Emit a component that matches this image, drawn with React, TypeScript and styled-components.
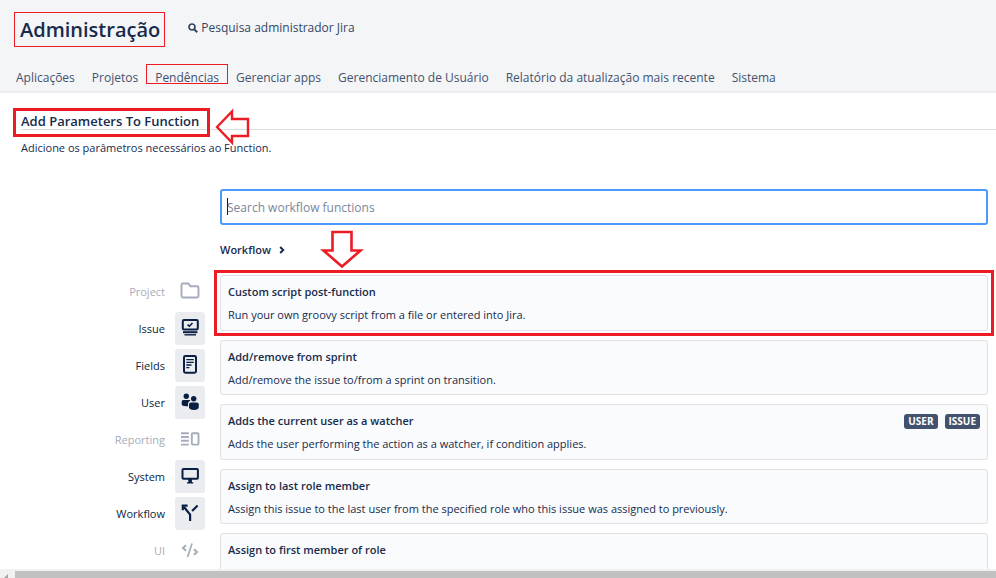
import React from "react";
import styled, { createGlobalStyle, css } from "styled-components";

const RED = "#ed1c24";
const NAVY = "#172b4d";

const GlobalStyle = createGlobalStyle`
  *, *::before, *::after { box-sizing: border-box; }
  body {
    margin: 0;
    background: #fff;
    color: ${NAVY};
    font: 11px/16px "Open Sans", "Noto Sans", sans-serif;
  }
  h1, h2, h3, p, ul { margin: 0; padding: 0; }
  button { font: inherit; color: inherit; background: none; border: 0; padding: 0; cursor: pointer; }
`;

const Page = styled.div`
  display: flex;
  flex-direction: column;
  height: 100vh;
  overflow: hidden;
`;

const Viewport = styled.div`
  flex: 1;
  min-height: 0;
  overflow: hidden;
`;

const Header = styled.header`
  background: #f4f5f7;
  border-bottom: 2px solid #ebecf0;
  padding-top: 12px;
`;

const TitleRow = styled.div`
  display: flex;
  align-items: flex-start;
  gap: 23px;
  padding: 0 14px;
`;

const PageTitle = styled.h1`
  border: 1px solid ${RED};
  padding: 0 4px 0 5px;
  font-size: 20px;
  font-weight: 600;
  line-height: 33px;
`;

const SearchTrigger = styled.button`
  display: flex;
  align-items: center;
  gap: 3px;
  height: 32px;
  color: #344563;
  font-size: 12px;
`;

const Nav = styled.nav`
  display: flex;
  gap: 17px;
  padding: 21px 16px 3px;
`;

const NavLink = styled.a<{ $marked?: boolean }>`
  position: relative;
  color: #42526e;
  font-size: 12px;
  line-height: 20px;
  text-decoration: none;
  white-space: nowrap;

  ${({ $marked }) =>
    $marked &&
    css`
      &::after {
        content: "";
        position: absolute;
        inset: -4px -9px 4px;
        border: 1px solid ${RED};
      }
    `}
`;

const Intro = styled.section`
  padding: 15px 0 0 13px;
`;

const HeadingRow = styled.div`
  position: relative;
  display: flex;
  align-items: center;

  &::before {
    content: "";
    position: absolute;
    top: 21px;
    left: 8px;
    right: 0;
    height: 1px;
    background: #dcdcdc;
  }
`;

const SectionTitle = styled.h2`
  position: relative;
  border: 3px solid ${RED};
  padding: 0 5px 2px;
  font-size: 13px;
  font-weight: 600;
  line-height: 21px;
  min-width: 197px;
`;

const LeftArrow = styled.svg`
  position: absolute;
  left: 202px;
  top: 0;
`;

const Hint = styled.p`
  padding: 2px 8px;
  line-height: 18px;
`;

const Workspace = styled.main`
  display: grid;
  grid-template-columns: 205px minmax(0, 1fr);
  column-gap: 15px;
  padding: 30px 8px 0 0;
`;

const SearchField = styled.label`
  grid-column: 2;
  position: relative;
  display: block;

  &::after {
    content: "";
    position: absolute;
    left: 7px;
    top: 9px;
    width: 1px;
    height: 17px;
    background: #091e42;
  }
`;

const SearchBox = styled.input`
  display: block;
  width: 100%;
  height: 36px;
  border: 2px solid #4c9aff;
  border-radius: 3px;
  padding: 0 5px;
  background: #fff;
  color: ${NAVY};
  font: 12px/20px "Open Sans", "Noto Sans", sans-serif;
  outline: 0;

  &::placeholder { color: #7a869a; opacity: 1; }
`;

const Crumbs = styled.div`
  grid-column: 2;
  position: relative;
  display: flex;
  align-items: center;
  height: 50px;
`;

const Crumb = styled.button`
  display: flex;
  align-items: center;
  gap: 8px;
  font-weight: 600;
`;

const DownArrow = styled.svg`
  position: absolute;
  left: 100px;
  top: 4px;
`;

const Categories = styled.ul`
  display: flex;
  flex-direction: column;
  gap: 4px;
  list-style: none;
`;

const Category = styled.button<{ $muted?: boolean }>`
  display: flex;
  justify-content: flex-end;
  align-items: center;
  gap: 10px;
  width: 100%;
  color: ${({ $muted }) => ($muted ? "#a5adba" : "#091e42")};
`;

const IconTile = styled.span<{ $muted?: boolean }>`
  width: 30px;
  height: 33px;
  border-radius: 3px;
  background: ${({ $muted }) => ($muted ? "transparent" : "#ebecf0")};
  svg { display: block; }
`;

const Functions = styled.ul`
  display: flex;
  flex-direction: column;
  gap: 9px;
  list-style: none;
`;

const Card = styled.li<{ $marked?: boolean }>`
  position: relative;
  border: 1px solid #dfe1e6;
  border-radius: 3px;
  background: #fafbfc;
  padding: 8px 7px 6px;

  &:nth-child(odd) { min-height: 56px; }

  ${({ $marked }) =>
    $marked &&
    css`
      &::after {
        content: "";
        position: absolute;
        inset: -6px -7px;
        border: 3px solid ${RED};
      }
    `}
`;

const CardHead = styled.div`
  display: flex;
  justify-content: space-between;
  align-items: center;
  height: 16px;
`;

const CardTitle = styled.h3`
  font-size: 11px;
  font-weight: 600;
`;

const CardText = styled.p`
  padding-top: 7px;
`;

const Tags = styled.div`
  display: flex;
  gap: 7px;
`;

const Tag = styled.span`
  border-radius: 3px;
  background: #42526e;
  color: #fff;
  padding: 0 4px;
  font-size: 10px;
  font-weight: 700;
  line-height: 15px;
`;

const ScrollTrack = styled.div`
  display: flex;
  flex: none;
  height: 9px;
  padding-top: 2px;
  background: #f1f1f1;
`;

const ScrollThumb = styled.div`
  flex: 1;
  background: #c1c1c1;
`;

const ScrollButton = styled.svg`
  width: 15px;
  height: 7px;
`;

type IconName = "project" | "issue" | "fields" | "user" | "reporting" | "system" | "workflow" | "ui";

const drawings: Record<IconName, React.ReactNode> = {
  project: (
    <path d="M6.5 10Q6.5 8.5 8 8.5H13.2L15.4 11.2H22Q23.5 11.2 23.5 12.7V21Q23.5 22.5 22 22.5H8Q6.5 22.5 6.5 21Z" />
  ),
  issue: (
    <>
      <rect x="7.8" y="8.1" width="15" height="9.4" rx="1.2" strokeWidth="2" />
      <path d="M12.5 12.6L14.4 14.2L17.5 11" strokeWidth="1.6" />
      <path d="M8 20.2H22.4" strokeWidth="2" />
      <path d="M9.5 22.8H21" strokeWidth="1.4" />
    </>
  ),
  fields: (
    <>
      <rect x="9" y="7.1" width="12" height="16.6" rx="1.4" strokeWidth="2" />
      <path d="M11.3 10.6H18.8M11.3 13.3H18.8M11.3 16H16.5M11.3 18.6H14.4" strokeWidth="1.3" />
    </>
  ),
  user: (
    <g fill="currentColor" stroke="none">
      <circle cx="11.3" cy="10.3" r="2.7" />
      <circle cx="18.7" cy="12.8" r="2.7" />
      <path d="M6.7 15.6Q6.7 14 8.3 14H14.2Q15.2 14 15.3 14.7Q13.2 15.4 13 17.5V20.2Q6.7 20.6 6.7 18Z" />
      <path d="M14 18.3Q14 16.4 16 16.4H21.7Q23.7 16.4 23.7 18.3V21.6Q23.3 24 18.9 24Q14.4 24 14 21.6Z" />
    </g>
  ),
  reporting: (
    <>
      <path d="M6 10.2H13.8M6 14H13.8M6 17.8H13.8M6 21.6H13.8" />
      <rect x="16.8" y="10.2" width="6.7" height="11.4" rx="1" />
    </>
  ),
  system: (
    <>
      <rect x="7.5" y="9.1" width="15.4" height="9.6" rx="1" strokeWidth="2" />
      <path d="M13.3 19H16.9V22.2H18.2V23.6H12V22.2H13.3Z" fill="currentColor" stroke="none" />
    </>
  ),
  workflow: (
    <>
      <path d="M15.1 24V17.6L9 10" strokeWidth="2.2" />
      <path d="M17.1 14L22.6 8.4" strokeWidth="2.2" />
      <path d="M7.8 13.2V8.7H12.6" strokeWidth="2.2" />
    </>
  ),
  ui: (
    <>
      <path d="M11 11.2L8 14L11 16.8M19 15.2L22 18L19 20.8" strokeWidth="2" />
      <path d="M17 9.6L12.6 23" strokeWidth="1.7" />
    </>
  ),
};

const CategoryIcon = ({ name }: { name: IconName }) => (
  <svg width="30" height="33" viewBox="0 0 30 33" fill="none" stroke="currentColor" strokeWidth="1.9" aria-hidden="true">
    {drawings[name]}
  </svg>
);

const navItems = [
  "Aplicações",
  "Projetos",
  "Pendências",
  "Gerenciar apps",
  "Gerenciamento de Usuário",
  "Relatório da atualização mais recente",
  "Sistema",
];

const categories: { label: string; icon: IconName; muted?: boolean }[] = [
  { label: "Project", icon: "project", muted: true },
  { label: "Issue", icon: "issue" },
  { label: "Fields", icon: "fields" },
  { label: "User", icon: "user" },
  { label: "Reporting", icon: "reporting", muted: true },
  { label: "System", icon: "system" },
  { label: "Workflow", icon: "workflow" },
  { label: "UI", icon: "ui", muted: true },
];

const functions: { title: string; text: string; tags?: string[]; marked?: boolean }[] = [
  {
    title: "Custom script post-function",
    text: "Run your own groovy script from a file or entered into Jira.",
    marked: true,
  },
  { title: "Add/remove from sprint", text: "Add/remove the issue to/from a sprint on transition." },
  {
    title: "Adds the current user as a watcher",
    text: "Adds the user performing the action as a watcher, if condition applies.",
    tags: ["USER", "ISSUE"],
  },
  {
    title: "Assign to last role member",
    text: "Assign this issue to the last user from the specified role who this issue was assigned to previously.",
  },
  { title: "Assign to first member of role", text: "Assign to the first member of the specified role." },
];

export default function App() {
  return (
    <Page>
      <GlobalStyle />
      <Viewport>
        <Header>
          <TitleRow>
            <PageTitle>Administração</PageTitle>
            <SearchTrigger type="button">
              <svg width="10" height="10" viewBox="0 0 10 10" fill="none" stroke="currentColor" aria-hidden="true">
                <circle cx="4" cy="4" r="3" strokeWidth="1.7" />
                <path d="M6.2 6.2L9.2 9.2" strokeWidth="2" />
              </svg>
              Pesquisa administrador Jira
            </SearchTrigger>
          </TitleRow>
          <Nav>
            {navItems.map((item) => (
              <NavLink key={item} href="#" $marked={item === "Pendências"}>
                {item}
              </NavLink>
            ))}
          </Nav>
        </Header>

        <Intro>
          <HeadingRow>
            <SectionTitle>Add Parameters To Function</SectionTitle>
            <LeftArrow width="36" height="38" viewBox="0 0 36 38" fill="none" stroke={RED} strokeWidth="2.4" aria-hidden="true">
              <path d="M2 19L17 3.5V11H33V28H17V34.5Z" />
            </LeftArrow>
          </HeadingRow>
          <Hint>Adicione os parâmetros necessários ao Function.</Hint>
        </Intro>

        <Workspace>
          <SearchField>
            <SearchBox type="text" aria-label="Search workflow functions" placeholder="Search workflow functions" />
          </SearchField>
          <Crumbs>
            <Crumb type="button">
              Workflow
              <svg width="6" height="8" viewBox="0 0 6 8" fill="none" stroke="currentColor" strokeWidth="2" aria-hidden="true">
                <path d="M1.2 1L4.2 4L1.2 7" />
              </svg>
            </Crumb>
            <DownArrow width="44" height="40" viewBox="0 0 44 40" fill="none" stroke={RED} strokeWidth="2.6" aria-hidden="true">
              <path d="M12.5 3H31.5V21.5H40.5L22 37.5L3.5 21.5H12.5Z" />
            </DownArrow>
          </Crumbs>
          <Categories>
            {categories.map(({ label, icon, muted }) => (
              <li key={label}>
                <Category type="button" $muted={muted}>
                  {label}
                  <IconTile $muted={muted}>
                    <CategoryIcon name={icon} />
                  </IconTile>
                </Category>
              </li>
            ))}
          </Categories>
          <Functions>
            {functions.map(({ title, text, tags, marked }) => (
              <Card key={title} $marked={marked}>
                <CardHead>
                  <CardTitle>{title}</CardTitle>
                  {tags && (
                    <Tags>
                      {tags.map((tag) => (
                        <Tag key={tag}>{tag}</Tag>
                      ))}
                    </Tags>
                  )}
                </CardHead>
                <CardText>{text}</CardText>
              </Card>
            ))}
          </Functions>
        </Workspace>
      </Viewport>
      <ScrollTrack>
        <ScrollButton viewBox="0 0 15 7" aria-hidden="true">
          <path d="M8 3V7H4Z" fill="#a3a3a3" />
        </ScrollButton>
        <ScrollThumb />
      </ScrollTrack>
    </Page>
  );
}
